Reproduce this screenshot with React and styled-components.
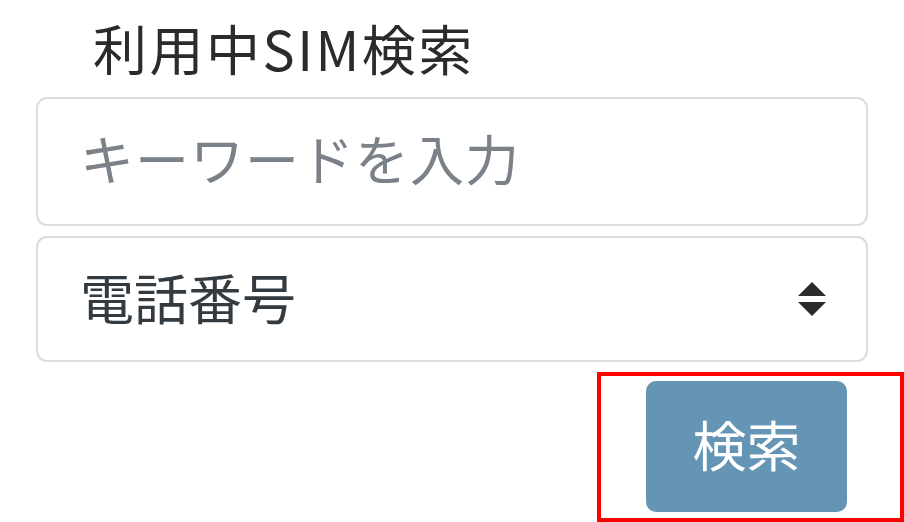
import React from "react";
import styled, { createGlobalStyle } from "styled-components";

const GlobalStyle = createGlobalStyle`
  body {
    margin: 0;
    background: #fff;
    font-family: "Noto Sans CJK JP", "Noto Sans", sans-serif;
  }
`;

const Page = styled.div`
  width: 904px;
  height: 522px;
  overflow: hidden;
  display: flex;
  flex-direction: column;
`;

const Title = styled.label`
  display: block;
  margin: 12px 0 0 93px;
  height: 85px;
  font-size: 54px;
  line-height: 72px;
  letter-spacing: 2.5px;
  color: #2b2b2b;
`;

const Fields = styled.div`
  display: flex;
  flex-direction: column;
  gap: 10px;
  margin: 0 36px;
`;

const TextInput = styled.input`
  box-sizing: border-box;
  width: 100%;
  height: 129px;
  padding: 0 42px 8px 42px;
  border: 2px solid #dcdcdc;
  border-radius: 11px;
  font-family: inherit;
  font-size: 54px;
  letter-spacing: 1px;
  color: #495057;
  outline: none;

  &::placeholder {
    color: #7b8189;
  }
`;

const SelectWrap = styled.div`
  position: relative;
`;

const Select = styled.select`
  box-sizing: border-box;
  width: 100%;
  height: 126px;
  padding: 0 42px 6px 42px;
  border: 2px solid #dcdcdc;
  border-radius: 11px;
  background: #fff;
  appearance: none;
  font-family: inherit;
  font-size: 54px;
  color: #333a40;
  outline: none;
`;

const Arrows = styled.svg`
  position: absolute;
  right: 42px;
  top: 46px;
  pointer-events: none;
`;

const ButtonRow = styled.div`
  display: flex;
  justify-content: flex-end;
  margin-top: 10px;
`;

const Highlight = styled.div`
  box-sizing: border-box;
  width: 307px;
  height: 150px;
  border: 4px solid #ff0000;
  padding: 5px 0 0 45px;
`;

const Button = styled.button`
  width: 201px;
  height: 131px;
  padding: 0 0 6px;
  border: none;
  border-radius: 10px;
  background: #6495b5;
  color: #fff;
  font-family: inherit;
  font-size: 54px;
  cursor: pointer;
`;

const App = () => {
  return (
    <Page>
      <GlobalStyle />
      <Title>利用中SIM検索</Title>
      <Fields>
        <TextInput placeholder="キーワードを入力" />
        <SelectWrap>
          <Select defaultValue="tel">
            <option value="tel">電話番号</option>
            <option value="iccid">ICCID</option>
          </Select>
          <Arrows width="28" height="34" viewBox="0 0 28 34">
            <path d="M14 0 L28 14 L0 14 Z" fill="#2b2b2b" />
            <path d="M0 20 L28 20 L14 34 Z" fill="#2b2b2b" />
          </Arrows>
        </SelectWrap>
      </Fields>
      <ButtonRow>
        <Highlight>
          <Button>検索</Button>
        </Highlight>
      </ButtonRow>
    </Page>
  );
};

export default App;
